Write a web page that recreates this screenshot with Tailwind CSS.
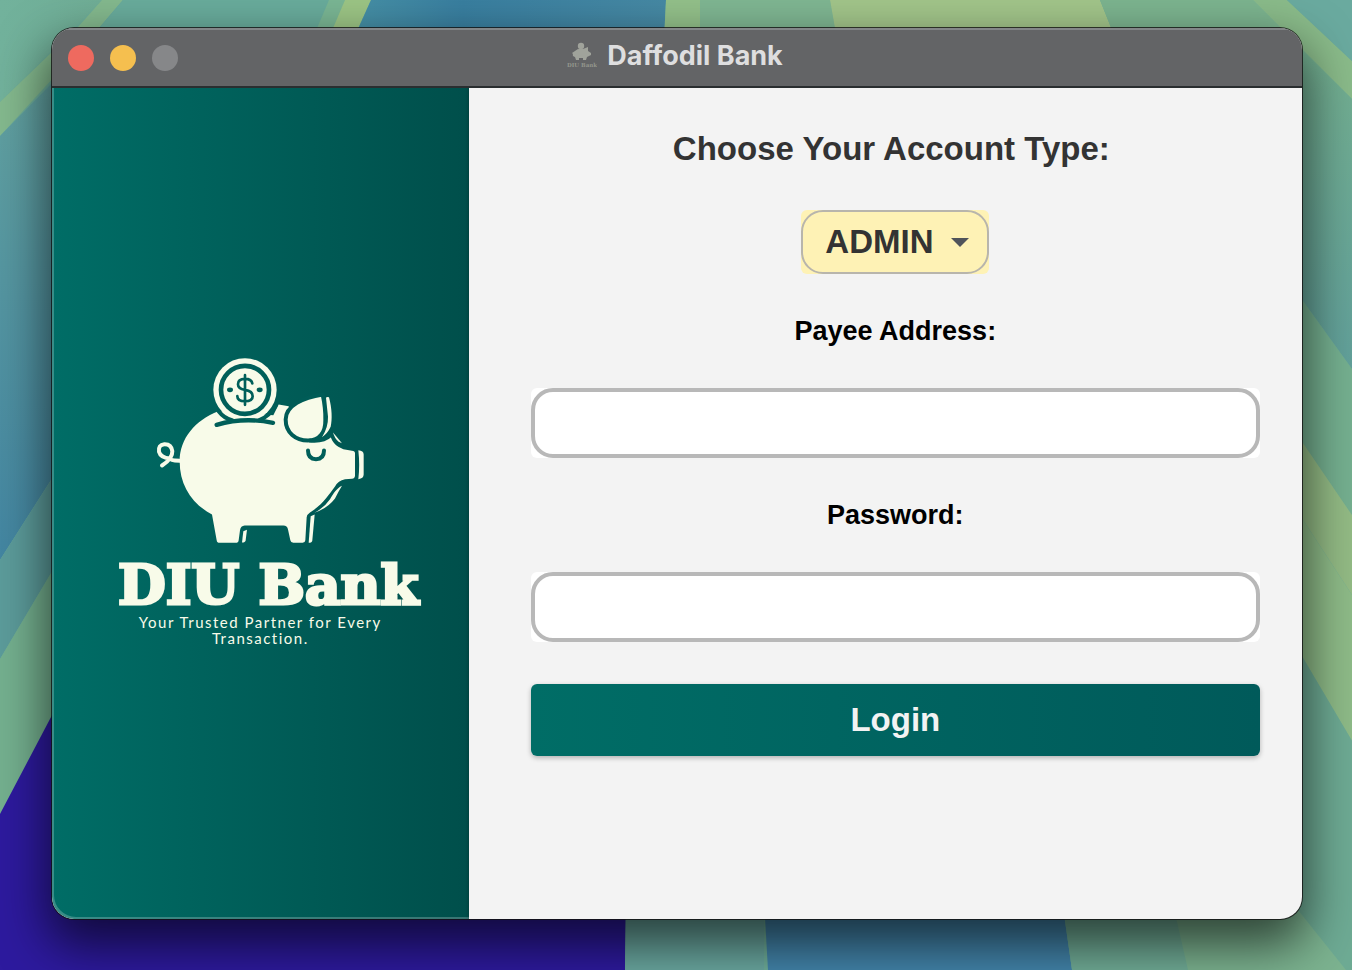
<!DOCTYPE html>
<html lang="en">
<head>
<meta charset="utf-8">
<meta name="viewport" content="width=device-width, initial-scale=1">
<title>Daffodil Bank</title>
<script src="https://cdn.jsdelivr.net/npm/@tailwindcss/browser@4"></script>
</head>
<body class="relative isolate flex min-h-screen overflow-x-hidden bg-[#6ba896] pt-7 pr-[50px] pb-[51px] pl-[52px] font-['Liberation_Sans',Arial,sans-serif]">

<!-- Desktop wallpaper -->
<svg class="absolute inset-0 -z-10 h-full w-full" viewBox="0 0 1352 970" preserveAspectRatio="none" aria-hidden="true">
  <defs>
    <linearGradient id="sky" x1="0" y1="0" x2="0" y2="1"><stop offset="0" stop-color="#67a6a0"/><stop offset="1" stop-color="#4386a2"/></linearGradient>
    <linearGradient id="blue" x1="0" y1="0" x2="1" y2="0"><stop offset="0" stop-color="#4690a6"/><stop offset=".35" stop-color="#397fa0"/><stop offset="1" stop-color="#4689a4"/></linearGradient>
    <linearGradient id="teal" x1="0" y1="0" x2="0" y2="1"><stop offset="0" stop-color="#74b090"/><stop offset="1" stop-color="#62a19b"/></linearGradient>
    <linearGradient id="corner" x1="0" y1="0" x2="1" y2="0"><stop offset="0" stop-color="#72b29c"/><stop offset="1" stop-color="#70ae96"/></linearGradient>
  </defs>
  <rect width="1352" height="970" fill="#6eae9a"/>
  <path d="M0 0H102L0 102Z" fill="url(#corner)"/>
  <path d="M102 0H123L100 27L0 136V102L78 27Z" fill="#84b98e"/>
  <path d="M123 0H335L200 120L51 480L0 560V136L51 84Z" fill="url(#sky)"/>
  <path d="M123 0H335L325 40H89Z" fill="#69ac9c"/>
  <path d="M329 0H345L333 40H312Z" fill="#7ab694"/>
  <path d="M345 0H371L353 40H328Z" fill="#9cc585"/>
  <path d="M371 0H666L664 40H353Z" fill="url(#blue)"/>
  <path d="M666 0H700V40H664Z" fill="#93c08a"/>
  <path d="M700 0H830L837 40H700Z" fill="#7fb692"/>
  <path d="M830 0H1100L1116 40H837Z" fill="#a2c58a"/>
  <path d="M1100 0H1253L1352 99V200H1200L1116 40Z" fill="#7cb48f"/>
  <path d="M1253 0H1287L1352 61V99Z" fill="#8abb8a"/>
  <path d="M1287 0H1352V61Z" fill="#6aaa9f"/>
  <path d="M1290 38L1352 99V369L1290 283Z" fill="url(#teal)"/>
  <path d="M1290 283L1352 369V515L1290 424Z" fill="#75b090"/>
  <path d="M1290 424L1352 515V595L1290 500Z" fill="#93bb85"/>
  <path d="M1290 500L1352 595V741L1290 636Z" fill="#8ebb88"/>
  <path d="M1290 636L1352 741V970H1290Z" fill="#6eab94"/>
  <path d="M0 560L60 466V558L0 659Z" fill="#5c9c9b"/>
  <path d="M0 659L60 558V700L0 814Z" fill="#74b08f"/>
  <path d="M0 814L60 700V900H626L625 970H0Z" fill="#2d1a9e"/>
  <path d="M626 900H764V970H625Z" fill="#6aa8a0"/>
  <path d="M764 900H1062L1072 970H768Z" fill="#4284aa"/>
  <path d="M1062 900H1172L1188 970H1072Z" fill="#70ac96"/>
  <path d="M1172 900H1290L1346 970H1188Z" fill="#7cb390"/>
</svg>

<div class="flex flex-1 flex-col overflow-hidden rounded-[22px] bg-[#f3f3f3] shadow-[0_0_0_1px_#111c,0_22px_50px_4px_#000000a0]">

  <header class="relative flex h-[60px] shrink-0 items-center justify-center border-t-2 border-b-2 border-t-[#838688] border-b-[#2a2e30] bg-[#636466]">
    <div class="absolute left-4 flex gap-4">
      <button type="button" aria-label="Close" class="size-[26px] rounded-full bg-[#ee6a5f]"></button>
      <button type="button" aria-label="Minimize" class="size-[26px] rounded-full bg-[#f5bf4f]"></button>
      <button type="button" aria-label="Zoom" disabled class="size-[26px] rounded-full bg-[#868789]"></button>
    </div>
    <div class="flex items-center gap-2.5 pr-1 pb-1">
      <svg class="h-7 w-[30px]" viewBox="0 0 30 28" fill="#a0a39b" aria-hidden="true">
        <circle cx="14" cy="4" r="3.2"/>
        <path d="M5 11L8 9Q11 6 16 7L21 5V9L24 11V13L20 15L19 18H16V16H12V18H9L8 15Q5 14 6 12Z"/>
        <text x="15" y="24.500" text-anchor="middle" font-family="DejaVu Serif, serif" font-weight="700" font-size="5.500" fill="#93968d">DIU Bank</text>
      </svg>
      <h1 class="font-['Inter',sans-serif] text-[27px] leading-8 font-bold text-[#dededf] [font-variation-settings:'opsz'_20]">Daffodil Bank</h1>
    </div>
  </header>

  <div class="flex flex-1">
    <aside class="flex w-1/3 shrink-0 flex-col items-center justify-center rounded-bl-[22px] bg-linear-to-r from-[#006d66] to-[#004f4b] pb-1 text-[#f8fbe9] shadow-[inset_2px_-2px_0_#ffffff38]">
      <svg class="ml-0.5 h-[187px] w-[210px]" viewBox="48 36 630 560" aria-hidden="true">
        <g fill="#f8fbe9">
          <path d="M235 198C165 225 119 280 119 348C119 420 155 475 216 508L230 585Q231 593 239 593H287Q295 593 296 585L300 555Q302 542 314 541H430Q442 541 444 553L451 585Q453 593 460 593H488Q495 593 496 585L500 516Q501 508 510 502C550 477 565 450 585 424Q594 406 615 402L636 401Q645 400 645 391V325Q645 317 636 317L610 312C590 305 577 292 572 275L530 290L470 270L446 183L416 178L400 210Z"/>
          <circle cx="315" cy="134" r="95"/>
          <path d="M655 315Q671 316 671 328V388Q671 400 655 402Q660 360 655 315Z"/>
          <path d="M579 262Q590 275 606 294L596 290Q584 280 579 262Z"/>
          <path d="M606 422C589 430 581 445 570 462Q552 488 523 503Q563 489 585 460Q595 440 606 422Z"/>
          <path d="M512 513L524 508L517 585Q516 593 506 593Z"/>
          <path d="M310 558L321 554L317 585Q316 592 306 592Z"/>
        </g>
        <g fill="none" stroke="#005f59" stroke-linecap="round">
          <circle cx="315" cy="134" r="72" stroke-width="14"/>
          <path d="M236 198Q252 219 276 225M406 184Q389 212 358 225" stroke-width="12"/>
          <path d="M230 239Q312 215 399 233" stroke-width="13"/>
          <path d="M504 316Q504 342 528 342Q552 342 552 316" stroke-width="12"/>
          <path d="M315 90V179M337 115Q335 101 315 101Q294 101 294 117Q294 131 315 134Q338 137 338 153Q338 168 315 168Q292 168 292 153" stroke-width="8"/>
        </g>
        <ellipse cx="270" cy="134" rx="9" ry="7" fill="#005f59"/>
        <ellipse cx="359" cy="134" rx="9" ry="7" fill="#005f59"/>
        <path d="M548 148C490 157 437 181 437 223C437 263 467 286 504 286C539 286 557 261 556 224Q557 190 548 148Z" fill="#f8fbe9" stroke="#005c57" stroke-width="12"/>
        <path d="M508 286Q550 291 572 270" fill="none" stroke="#005c57" stroke-width="12"/>
        <path d="M558 158Q560 154 567 156C576 190 577 221 572 245Q563 265 546 276Q565 247 564 215Z" fill="#f8fbe9"/>
        <path d="M119 347L104 346Q96 346 89 340Q62 338 57 320Q54 299 73 297Q94 296 97 318Q98 341 66 361" fill="none" stroke="#f8fbe9" stroke-width="12" stroke-linecap="round" stroke-linejoin="round"/>
      </svg>
      <p class="mt-3 ml-4 font-['DejaVu_Serif',serif] text-[55px] leading-[58px] font-bold whitespace-nowrap [-webkit-text-stroke:3px_#f8fbe9] [stroke-linejoin:round]">DIU Bank</p>
      <p class="w-[270px] text-center font-['Lato',sans-serif] text-[15px] leading-4 tracking-widest">Your Trusted Partner for Every Transaction.</p>
    </aside>

    <main class="flex-1 shadow-[-1px_0_3px_#0003]">
      <form class="flex flex-col items-center gap-[42px] pt-[42px] pr-[42px] pb-10 pl-[62px]">
        <label for="account" class="mr-2 text-[33px] leading-[38px] font-bold text-[#333]">Choose Your Account Type:</label>
        <div class="relative rounded-md bg-[#fef2b5]">
          <select id="account" class="block h-16 w-[188px] appearance-none rounded-[22px] border-2 border-[#b8b5ac] bg-[#fef2b5] pl-[22px] text-[33px] leading-[38px] font-bold text-[#333]">
            <option>ADMIN</option>
            <option>USER</option>
          </select>
          <svg class="pointer-events-none absolute top-7 right-5 h-[9px] w-[18px]" viewBox="0 0 18 9" fill="#50545a" aria-hidden="true"><path d="M0 0H18L9 9Z"/></svg>
        </div>
        <label for="payee" class="text-[27px] leading-[30px] font-bold text-black">Payee Address:</label>
        <div class="w-full rounded-md bg-white">
          <input id="payee" type="text" class="block h-[70px] w-full rounded-[22px] border-4 border-[#b8b8b8] bg-white px-5 text-[27px]">
        </div>
        <label for="password" class="text-[27px] leading-[30px] font-bold text-black">Password:</label>
        <div class="w-full rounded-md bg-white">
          <input id="password" type="password" class="block h-[70px] w-full rounded-[22px] border-4 border-[#b8b8b8] bg-white px-5 text-[27px]">
        </div>
        <button type="submit" class="h-[72px] w-full rounded-md bg-linear-to-r from-[#006d66] to-[#005a5a] text-[33px] leading-[38px] font-bold text-[#f3f3f3] shadow-[0_2px_5px_#0004]">Login</button>
      </form>
    </main>
  </div>
</div>
</body>
</html>
